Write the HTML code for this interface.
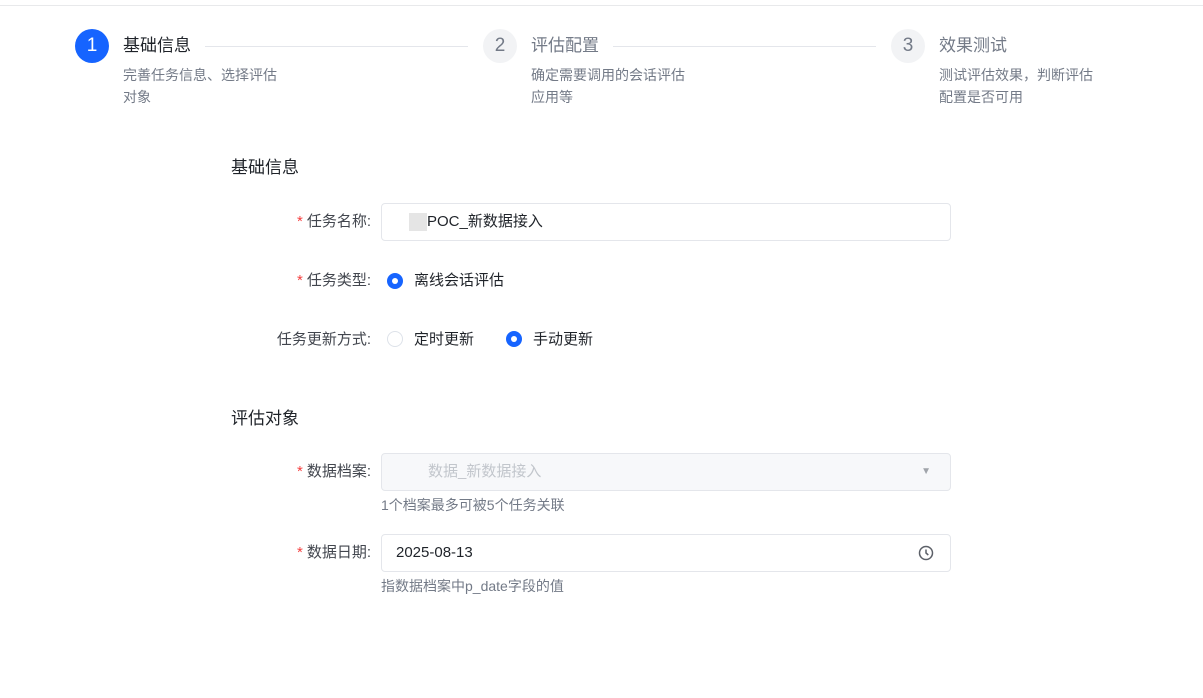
<!DOCTYPE html>
<html><head><meta charset="utf-8"><style>
body{margin:0;width:1203px;height:698px;background:#fff;font-family:"Liberation Sans","Noto Sans CJK SC",sans-serif;position:relative;overflow:hidden;color:#1f2329}
.a{position:absolute}
.top{left:0;top:5px;width:1203px;height:1px;background:#e8e9eb}
.c{width:34px;height:34px;border-radius:50%;text-align:center;line-height:34px;font-size:19px}
.c1{background:#1664ff;color:#fff}
.c2{background:#f2f3f5;color:#737a87}
.st{font-size:17px;line-height:22px}
.ds{font-size:14px;line-height:22px;color:#737a87}
.ln{height:1px;background:#e4e6eb}
.sec{font-size:17px;line-height:22px;color:#1f2329}
.lb{font-size:15px;line-height:20px;color:#42464e;text-align:right;width:200px}
.lb i{color:#f53f3f;font-style:normal;margin-right:4px}
.in{left:381px;width:568px;height:36px;border:1px solid #e4e6eb;border-radius:4px;font-size:15px;line-height:36px;box-sizing:content-box}
.rd{width:16px;height:16px;border-radius:50%;box-sizing:border-box}
.on{background:#1664ff;border:0}
.on:after{content:"";position:absolute;left:5px;top:5px;width:6px;height:6px;border-radius:50%;background:#fff}
.off{border:1px solid #dde2e9;background:#fff}
.t{font-size:15px;line-height:20px}
.h{font-size:14px;line-height:18px;color:#737a87}
</style></head><body>
<div class="a top"></div>
<div class="a c c1" style="left:75px;top:29px">1</div>
<div class="a st" style="left:123px;top:35px">基础信息</div>
<div class="a ln" style="left:205px;top:46px;width:263px"></div>
<div class="a ds" style="left:123px;top:64px">完善任务信息、选择评估<br>对象</div>
<div class="a c c2" style="left:483px;top:29px">2</div>
<div class="a st" style="left:531px;top:35px;color:#737a87">评估配置</div>
<div class="a ln" style="left:613px;top:46px;width:263px"></div>
<div class="a ds" style="left:531px;top:64px">确定需要调用的会话评估<br>应用等</div>
<div class="a c c2" style="left:891px;top:29px">3</div>
<div class="a st" style="left:939px;top:35px;color:#737a87">效果测试</div>
<div class="a ds" style="left:939px;top:64px">测试评估效果，判断评估<br>配置是否可用</div>

<div class="a sec" style="left:231px;top:157px">基础信息</div>
<div class="a lb" style="left:171px;top:212px"><i>*</i>任务名称:</div>
<div class="a in" style="top:203px"><span style="display:inline-block;width:18px;height:18px;background:#e5e5e5;vertical-align:middle;margin:0 0 0 27px"></span><span style="color:#1f2329">POC_新数据接入</span></div>
<div class="a lb" style="left:171px;top:271px"><i>*</i>任务类型:</div>
<div class="a rd on" style="left:387px;top:273px"></div>
<div class="a t" style="left:414px;top:271px">离线会话评估</div>
<div class="a lb" style="left:171px;top:330px">任务更新方式:</div>
<div class="a rd off" style="left:387px;top:331px"></div>
<div class="a t" style="left:414px;top:330px">定时更新</div>
<div class="a rd on" style="left:506px;top:331px"></div>
<div class="a t" style="left:533px;top:330px">手动更新</div>

<div class="a sec" style="left:231px;top:408px">评估对象</div>
<div class="a lb" style="left:171px;top:462px"><i>*</i>数据档案:</div>
<div class="a in" style="top:453px;background:#f7f8fa;color:#c2c6cc"><span style="margin-left:46px">数据_新数据接入</span><span style="position:absolute;right:19px;top:0;font-size:10px;color:#a0a4aa">▼</span></div>
<div class="a h" style="left:381px;top:496px">1个档案最多可被5个任务关联</div>
<div class="a lb" style="left:171px;top:543px"><i>*</i>数据日期:</div>
<div class="a in" style="top:534px"><span style="margin-left:14px">2025-08-13</span>
<svg style="position:absolute;right:16px;top:10px" width="16" height="16" viewBox="0 0 16 16" fill="none" stroke="#5c6068" stroke-width="1.5"><circle cx="8" cy="8" r="6.5"/><path d="M8 4.5V8l2.3 2"/></svg></div>
<div class="a h" style="left:381px;top:577px">指数据档案中p_date字段的值</div>
</body></html>
